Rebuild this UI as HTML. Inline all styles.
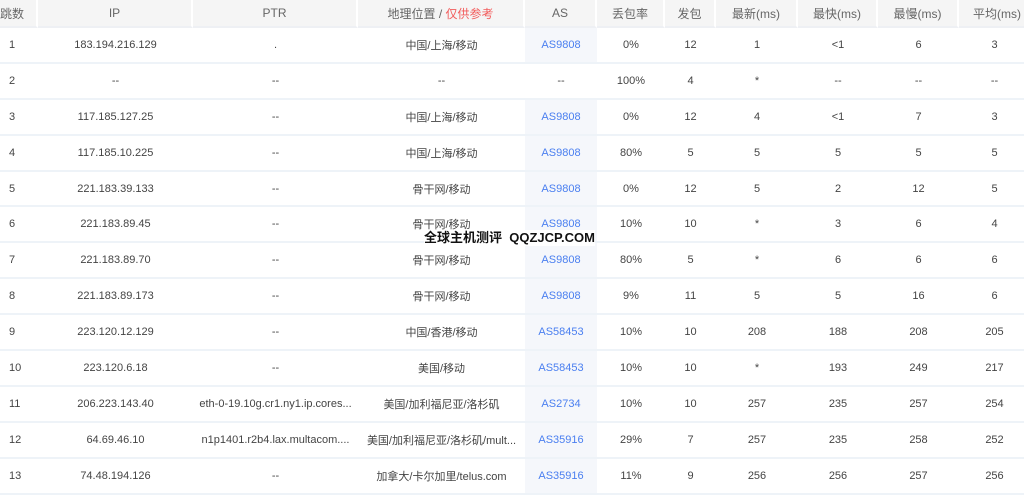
<!DOCTYPE html>
<html><head><meta charset="utf-8"><style>
body{margin:0;width:1024px;height:485px;overflow:hidden;background:#fff;font-family:"Liberation Sans","Noto Sans CJK SC",sans-serif;font-size:11px;color:#444}
table{border-collapse:separate;border-spacing:0;table-layout:fixed;width:1030px}
th{height:26px;background:#f5f5f5;font-weight:normal;color:#666;font-size:12px;border-right:2px solid #fff;border-bottom:2px solid #eef0f4;padding:0}
td{height:33.9px;text-align:center;border-bottom:2px solid #eef3f8;padding:0;white-space:nowrap;overflow:hidden}
td:first-child{text-align:left;padding-left:9px}
td.as{background:#f5f7fb;color:#4a7ff0}
.red{color:#f25c5c}
.wm{position:absolute;left:424px;top:230px;font-weight:bold;font-size:13px;color:#111;background:#fff;line-height:16px}
</style></head><body>
<table>
<colgroup><col style="width:38px"><col style="width:155px"><col style="width:165px"><col style="width:167px"><col style="width:72px"><col style="width:68px"><col style="width:51px"><col style="width:82px"><col style="width:80px"><col style="width:81px"><col style="width:71px"></colgroup>
<tr><th style="text-align:left">跳数</th><th>IP</th><th>PTR</th><th>地理位置 / <span class="red">仅供参考</span></th><th>AS</th><th>丢包率</th><th>发包</th><th>最新(ms)</th><th>最快(ms)</th><th>最慢(ms)</th><th style="text-align:left;padding-left:14px">平均(ms)</th></tr>
<tr><td>1</td><td>183.194.216.129</td><td>.</td><td>中国/上海/移动</td><td class="as">AS9808</td><td>0%</td><td>12</td><td>1</td><td>&lt;1</td><td>6</td><td>3</td></tr>
<tr><td>2</td><td>--</td><td>--</td><td>--</td><td class="as" style="background:#fff;color:#444">--</td><td>100%</td><td>4</td><td>*</td><td>--</td><td>--</td><td>--</td></tr>
<tr><td>3</td><td>117.185.127.25</td><td>--</td><td>中国/上海/移动</td><td class="as">AS9808</td><td>0%</td><td>12</td><td>4</td><td>&lt;1</td><td>7</td><td>3</td></tr>
<tr><td>4</td><td>117.185.10.225</td><td>--</td><td>中国/上海/移动</td><td class="as">AS9808</td><td>80%</td><td>5</td><td>5</td><td>5</td><td>5</td><td>5</td></tr>
<tr><td>5</td><td>221.183.39.133</td><td>--</td><td>骨干网/移动</td><td class="as">AS9808</td><td>0%</td><td>12</td><td>5</td><td>2</td><td>12</td><td>5</td></tr>
<tr><td>6</td><td>221.183.89.45</td><td>--</td><td>骨干网/移动</td><td class="as">AS9808</td><td>10%</td><td>10</td><td>*</td><td>3</td><td>6</td><td>4</td></tr>
<tr><td>7</td><td>221.183.89.70</td><td>--</td><td>骨干网/移动</td><td class="as">AS9808</td><td>80%</td><td>5</td><td>*</td><td>6</td><td>6</td><td>6</td></tr>
<tr><td>8</td><td>221.183.89.173</td><td>--</td><td>骨干网/移动</td><td class="as">AS9808</td><td>9%</td><td>11</td><td>5</td><td>5</td><td>16</td><td>6</td></tr>
<tr><td>9</td><td>223.120.12.129</td><td>--</td><td>中国/香港/移动</td><td class="as">AS58453</td><td>10%</td><td>10</td><td>208</td><td>188</td><td>208</td><td>205</td></tr>
<tr><td>10</td><td>223.120.6.18</td><td>--</td><td>美国/移动</td><td class="as">AS58453</td><td>10%</td><td>10</td><td>*</td><td>193</td><td>249</td><td>217</td></tr>
<tr><td>11</td><td>206.223.143.40</td><td>eth-0-19.10g.cr1.ny1.ip.cores...</td><td>美国/加利福尼亚/洛杉矶</td><td class="as">AS2734</td><td>10%</td><td>10</td><td>257</td><td>235</td><td>257</td><td>254</td></tr>
<tr><td>12</td><td>64.69.46.10</td><td>n1p1401.r2b4.lax.multacom....</td><td>美国/加利福尼亚/洛杉矶/mult...</td><td class="as">AS35916</td><td>29%</td><td>7</td><td>257</td><td>235</td><td>258</td><td>252</td></tr>
<tr><td>13</td><td>74.48.194.126</td><td>--</td><td>加拿大/卡尔加里/telus.com</td><td class="as">AS35916</td><td>11%</td><td>9</td><td>256</td><td>256</td><td>257</td><td>256</td></tr>
</table>
<div class="wm">全球主机测评&nbsp; QQZJCP.COM</div>
</body></html>
